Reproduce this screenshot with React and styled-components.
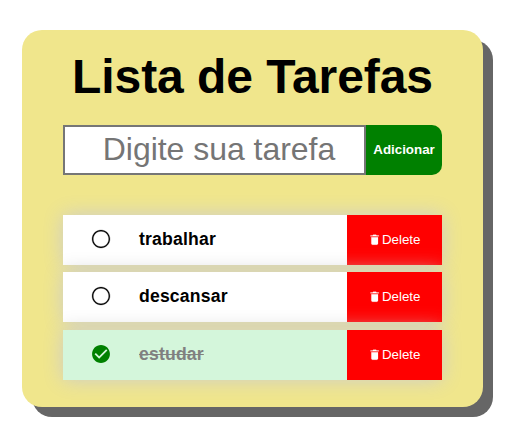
import React from "react";
import styled, { createGlobalStyle } from "styled-components";
import {
  IoIosRadioButtonOff,
  IoMdCheckmarkCircle,
  IoMdTrash,
} from "react-icons/io";

const GlobalStyle = createGlobalStyle`
  * { box-sizing: border-box; }
  body { margin: 0; background: #fff; font-family: "Liberation Sans", Arial, sans-serif; }
`;

const Page = styled.main`
  height: 444px;
  padding: 30px 0 0 22px;
  overflow: hidden;
`;

const Card = styled.section`
  width: 461px;
  height: 377px;
  padding: 20px 41px 0;
  border-radius: 20px;
  background: khaki;
  box-shadow: 10px 10px 0 #666;
`;

const Title = styled.h1`
  margin: 0;
  height: 55px;
  line-height: 54px;
  font-size: 48px;
  letter-spacing: -0.06px;
  text-align: center;
  white-space: nowrap;
`;

const Form = styled.form`
  display: flex;
  height: 50px;
  margin: 20px 0 39.9px;
`;

const Input = styled.input`
  width: 303px;
  height: 50px;
  padding: 0 0 2px 9px;
  border: 2px solid #767676;
  background: #fff;
  font: 32px "Liberation Sans", Arial, sans-serif;
  letter-spacing: -0.03px;
  text-align: center;
  &::placeholder { color: #757575; }
`;

const AddButton = styled.button`
  flex: 1;
  padding: 0 0 2px;
  border: 0;
  border-radius: 0 10px 10px 0;
  background: green;
  color: #fff;
  font: bold 13.33px "Liberation Sans", Arial, sans-serif;
`;

const TaskList = styled.ul`
  display: grid;
  row-gap: 7.5px;
  margin: 0;
  padding: 0;
  list-style: none;
`;

const Task = styled.li`
  display: flex;
  align-items: center;
  height: 50px;
  background: ${({ $done }) => ($done ? "#d4f6db" : "#fff")};
  box-shadow: 0 0 20px #ccc;
`;

const Status = styled.span`
  display: flex;
  justify-content: center;
  width: 76px;
  padding-bottom: 2px;
  font-size: 22px;
  color: ${({ $done }) => ($done ? "green" : "#000")};
`;

const OpenCircle = styled(IoIosRadioButtonOff)`
  stroke-width: 6px;
`;

const Label = styled.span`
  flex: 1;
  padding-bottom: 0.9px;
  font-size: 17.6px;
  font-weight: bold;
  letter-spacing: 0.18px;
  color: ${({ $done }) => ($done ? "gray" : "#000")};
  text-decoration: ${({ $done }) => ($done ? "line-through" : "none")};
`;

const DeleteButton = styled.button`
  display: flex;
  align-items: center;
  justify-content: center;
  width: 95px;
  height: 50px;
  padding: 0 0 0.9px;
  border: 0;
  background: red;
  color: #fff;
  font: 13.33px "Liberation Sans", Arial, sans-serif;
`;

const TrashIcon = styled(IoMdTrash)`
  margin: 0 0.7px 0 -0.7px;
  stroke-width: 8px;
`;

const tasks = [
  { name: "trabalhar", done: false },
  { name: "descansar", done: false },
  { name: "estudar", done: true },
];

export default function App() {
  return (
    <Page>
      <GlobalStyle />
      <Card>
        <Title>Lista de Tarefas</Title>
        <Form onSubmit={(e) => e.preventDefault()}>
          <Input placeholder="Digite sua tarefa" />
          <AddButton>Adicionar</AddButton>
        </Form>
        <TaskList>
          {tasks.map(({ name, done }) => (
            <Task key={name} $done={done}>
              <Status $done={done}>
                {done ? <IoMdCheckmarkCircle /> : <OpenCircle />}
              </Status>
              <Label $done={done}>{name}</Label>
              <DeleteButton type="button">
                <TrashIcon />
                Delete
              </DeleteButton>
            </Task>
          ))}
        </TaskList>
      </Card>
    </Page>
  );
}
